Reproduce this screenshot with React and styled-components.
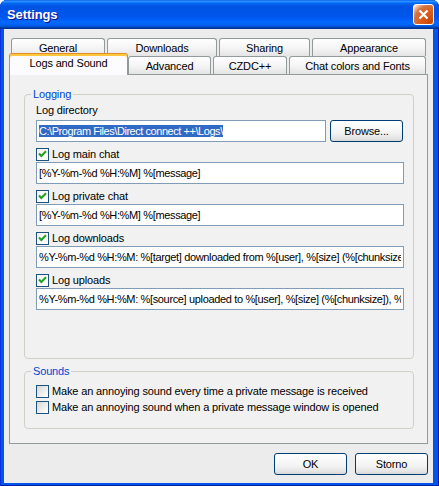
import React from 'react'
import styled, { createGlobalStyle, css } from 'styled-components'

const GlobalStyle = createGlobalStyle`
  html, body {
    margin: 0;
    padding: 0;
    background: #ffffff;
  }
  body {
    font-family: "Liberation Sans", Arial, sans-serif;
    font-size: 11px;
    letter-spacing: -0.15px;
    color: #000;
  }
`

const Window = styled.div`
  width: 439px;
  height: 486px;
  box-sizing: border-box;
  display: flex;
  flex-direction: column;
  background: #0055ea;
  border-radius: 7px 7px 0 0;
  overflow: hidden;
  box-shadow: inset 1px 0 #0831d9, inset -1px 0 #001ea0, inset 0 -1px #001ea0;
`

const TitleBar = styled.div`
  height: 29px;
  flex: none;
  box-sizing: border-box;
  display: flex;
  align-items: center;
  justify-content: space-between;
  padding: 0 5px 0 7px;
  background: linear-gradient(
    to bottom,
    #0058ee 0%,
    #3593ff 4%,
    #288eff 6%,
    #127dff 8%,
    #036ffc 10%,
    #0262ee 14%,
    #0057e5 20%,
    #0054e3 24%,
    #0055eb 56%,
    #005bf5 66%,
    #026afe 76%,
    #0062ef 86%,
    #0052d6 92%,
    #0040ab 94%,
    #003092 100%
  );
`

const Title = styled.span`
  color: #fff;
  font-weight: bold;
  font-size: 13px;
  letter-spacing: -0.1px;
  text-shadow: 1px 1px #0f1089;
`

const CloseButton = styled.div`
  width: 21px;
  height: 21px;
  box-sizing: border-box;
  border: 1px solid #fff;
  border-radius: 3px;
  display: flex;
  align-items: center;
  justify-content: center;
  background: radial-gradient(
    circle at 90% 90%,
    #cc4600 0%,
    #dc6527 55%,
    #cd7546 70%,
    #ffccb2 90%,
    #ffffff 100%
  );
`

const Body = styled.div`
  flex: 1;
  margin: 0 6px 3px 4px;
  background: #ececec;
  display: flex;
  flex-direction: column;
  padding: 9px 5px 8px 5px;
  box-sizing: border-box;
`

const TabRow = styled.div`
  display: flex;
  align-items: flex-end;
  height: ${(p) => (p.$front ? 21 : 18)}px;
  padding-left: ${(p) => (p.$front ? 0 : 2)}px;
  margin-top: ${(p) => (p.$front ? -3 : 0)}px;
`

const Tab = styled.div`
  box-sizing: border-box;
  width: ${(p) => p.$w}px;
  height: 18px;
  margin-left: ${(p) => p.$ml || 0}px;
  display: flex;
  align-items: center;
  justify-content: center;
  border: 1px solid #919b9c;
  border-bottom: none;
  border-radius: 3px 3px 0 0;
  background: linear-gradient(#ffffff, #f4f4f4 55%, #e4e4e4);
  white-space: nowrap;
  padding-top: 1px;

  ${(p) =>
    p.$selected &&
    css`
      position: relative;
      z-index: 1;
      height: 22px;
      margin-bottom: -1px;
      background: #fcfcfe;
      border-top: 1px solid #e68b2c;
      box-shadow: inset 0 2px #ffc73c;
      padding: 0 0 4px 0;
    `}
`

const Panel = styled.div`
  box-sizing: border-box;
  height: 370px;
  border: 1px solid #919b9c;
  background: #f1f1f1;
  display: flex;
  flex-direction: column;
  gap: 6px;
  padding: 13px 13px 14px 14px;
`

const Group = styled.fieldset`
  margin: 0;
  min-width: 0;
  border: 1px solid #d0d0c8;
  border-radius: 4px;
  padding: ${(p) => (p.$grow ? '3px 9px 0 11px' : '5px 9px 13px 11px')};
  flex: ${(p) => (p.$grow ? 1 : 'none')};
  display: flex;
  flex-direction: column;
`

const Legend = styled.legend`
  color: #0046d5;
  padding: 0 2px;
  margin-left: -5px;
  line-height: 13px;
`

const Label = styled.div`
  line-height: 13px;
  margin-bottom: 3px;
`

const DirRow = styled.div`
  display: flex;
  gap: 4px;
  padding-right: 1px;
`

const DirField = styled.div`
  flex: 1;
  min-width: 0;
  box-sizing: border-box;
  height: 22px;
  border: 1px solid #7f9db9;
  background: #fff;
  padding: 0 2px;
  display: flex;
  align-items: center;
  white-space: nowrap;
  overflow: hidden;
  letter-spacing: -0.45px;
`

const Selected = styled.span`
  background: #316ac5;
  color: #fff;
`

const FormatInput = styled.input`
  flex: none;
  width: 100%;
  box-sizing: border-box;
  height: 22px;
  margin: 0;
  border: 1px solid #7f9db9;
  border-radius: 0;
  background: #fff;
  padding: 0 2px;
  font: inherit;
  letter-spacing: -0.35px;
  color: #000;
  outline: none;
`

const Button = styled.div`
  box-sizing: border-box;
  width: 73px;
  height: 22px;
  flex: none;
  border: 1px solid #003c74;
  border-radius: 3px;
  display: flex;
  align-items: center;
  justify-content: center;
  background: linear-gradient(#ffffff, #f3f3f3 60%, #e2e2e2 90%, #d6d6d6);
`

const CheckRow = styled.div`
  display: flex;
  align-items: center;
  gap: 3px;
  flex: none;
  height: ${(p) => (p.$compact ? 16 : 14)}px;
  margin: ${(p) => (p.$compact ? '0' : '5px 0 1px 0')};
  white-space: nowrap;
`

const Box = styled.span`
  width: 13px;
  height: 13px;
  box-sizing: border-box;
  flex: none;
  border: 1px solid #1c5180;
  display: flex;
  align-items: center;
  justify-content: center;
  background: ${(p) =>
    p.$checked
      ? 'linear-gradient(135deg, #f2f2f0, #ffffff)'
      : 'linear-gradient(135deg, #d6d6d2, #f4f4f2 70%, #ffffff)'};
`

const Footer = styled.div`
  display: flex;
  justify-content: flex-end;
  gap: 8px;
  margin-top: 9px;
`

const Check = ({ checked, label, compact }) => (
  <CheckRow $compact={compact}>
    <Box $checked={checked}>
      {checked && (
        <svg width="11" height="11" viewBox="0 0 11 11">
          <path d="M2 4.5 L4.3 7 L9 2.3" fill="none" stroke="#21a121" strokeWidth="2" />
        </svg>
      )}
    </Box>
    <span>{label}</span>
  </CheckRow>
)

const formats = [
  { label: 'Log main chat', value: '[%Y-%m-%d %H:%M] %[message]' },
  { label: 'Log private chat', value: '[%Y-%m-%d %H:%M] %[message]' },
  {
    label: 'Log downloads',
    value: '%Y-%m-%d %H:%M: %[target] downloaded from %[user], %[size] (%[chunksize]), %[speed], %[time]',
  },
  {
    label: 'Log uploads',
    value: '%Y-%m-%d %H:%M: %[source] uploaded to %[user], %[size] (%[chunksize]), %[speed], %[time]',
  },
]

const App = () => (
  <>
    <GlobalStyle />
    <Window>
      <TitleBar>
        <Title>Settings</Title>
        <CloseButton>
          <svg width="13" height="13" viewBox="0 0 13 13">
            <path d="M2.5 2.5 L10.5 10.5 M10.5 2.5 L2.5 10.5" stroke="#fff" strokeWidth="2.2" />
          </svg>
        </CloseButton>
      </TitleBar>
      <Body>
        <TabRow>
          <Tab $w={94}>General</Tab>
          <Tab $w={110} $ml={2}>Downloads</Tab>
          <Tab $w={91} $ml={2}>Sharing</Tab>
          <Tab $w={114} $ml={2}>Appearance</Tab>
        </TabRow>
        <TabRow $front>
          <Tab $w={119} $selected>Logs and Sound</Tab>
          <Tab $w={83}>Advanced</Tab>
          <Tab $w={74} $ml={2}>CZDC++</Tab>
          <Tab $w={137} $ml={2}>Chat colors and Fonts</Tab>
        </TabRow>
        <Panel>
          <Group $grow>
            <Legend>Logging</Legend>
            <Label>Log directory</Label>
            <DirRow>
              <DirField>
                <Selected>{'C:\\Program Files\\Direct connect ++\\Logs\\'}</Selected>
              </DirField>
              <Button>Browse...</Button>
            </DirRow>
            {formats.map((f) => (
              <React.Fragment key={f.label}>
                <Check checked label={f.label} />
                <FormatInput readOnly value={f.value} />
              </React.Fragment>
            ))}
          </Group>
          <Group>
            <Legend>Sounds</Legend>
            <Check compact label="Make an annoying sound every time a private message is received" />
            <Check compact label="Make an annoying sound when a private message window is opened" />
          </Group>
        </Panel>
        <Footer>
          <Button>OK</Button>
          <Button>Storno</Button>
        </Footer>
      </Body>
    </Window>
  </>
)

export default App
